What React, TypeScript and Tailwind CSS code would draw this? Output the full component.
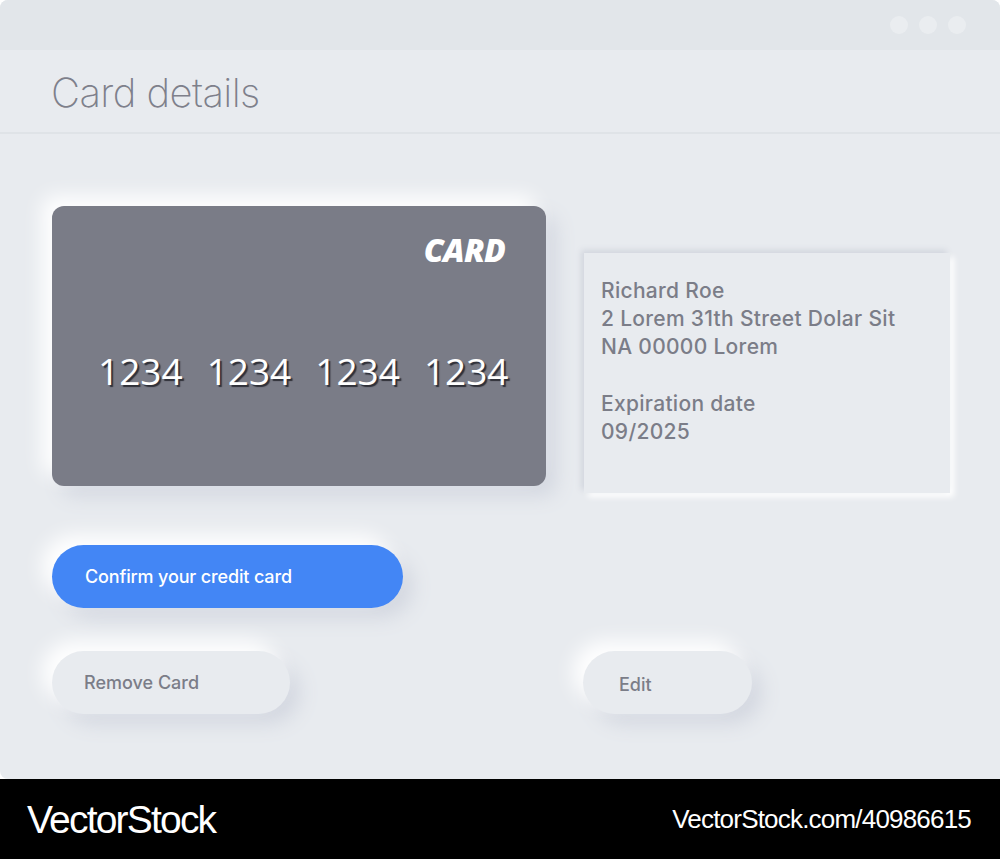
import React from "react";

const neo = "shadow-[-10px_-10px_20px_#ffffff,10px_10px_20px_#d3d7e0]";

export default function App() {
  return (
    <div className="w-[1000px] h-[859px] bg-white flex flex-col" style={{ fontFamily: "Inter, 'Noto Sans', sans-serif" }}>
      <div className="h-[779px] bg-[#e8ebef] rounded-t-[8px] rounded-bl-[8px] overflow-hidden flex flex-col">
        <div className="h-[50px] bg-[#e2e6ea] flex items-center justify-end gap-[11px] pr-[34px]">
          <div className="w-[18px] h-[18px] rounded-full bg-[#eaedf0]" />
          <div className="w-[18px] h-[18px] rounded-full bg-[#eaedf0]" />
          <div className="w-[18px] h-[18px] rounded-full bg-[#eaedf0]" />
        </div>
        <div className="h-[84px] border-b-2 border-[#dfe3e7] flex items-center pl-[51px]">
          <span className="text-[40px] font-extralight text-[#7e808b] tracking-[-0.6px] leading-none mt-[4px]">Card details</span>
        </div>
        <div className="flex-1 pl-[52px] pt-[72px] flex flex-col">
          <div className="flex items-start gap-[38px]">
            <div className={`w-[494px] h-[280px] rounded-[12px] bg-[#7a7c87] flex flex-col ${neo}`}>
              <div className="flex justify-end pr-[41px] pt-[24px]">
                <span className="text-[32px] leading-[40px] font-extrabold italic text-white tracking-[-0.8px]" style={{ fontFamily: "'Open Sans', sans-serif" }}>CARD</span>
              </div>
              <div className="flex gap-[24px] pl-[46px] mt-[82px]">
                {["1234", "1234", "1234", "1234"].map((n, i) => (
                  <span key={i} className="text-[37px] text-white leading-none [text-shadow:2px_2px_1px_#2f3038]" style={{ fontFamily: "'Open Sans', sans-serif" }}>{n}</span>
                ))}
              </div>
            </div>
            <div className="mt-[47px] w-[366px] h-[240px] bg-[#e8ebef] shadow-[-3px_-3px_6px_#d2d6de,4px_4px_6px_#ffffff] pl-[17px] pt-[24px] text-[21px] font-medium text-[#7b7d88] leading-[28px] tracking-[0.3px]">
              <div>Richard Roe</div>
              <div>2 Lorem 31th Street Dolar Sit</div>
              <div>NA 00000 Lorem</div>
              <div className="mt-[29px]">Expiration date</div>
              <div>09/2025</div>
            </div>
          </div>
          <div className={`mt-[52px] w-[351px] h-[63px] rounded-full bg-[#4386f5] flex items-center pl-[33px] text-[18px] font-medium text-white tracking-[-0.15px] ${neo}`}>
            Confirm your credit card
          </div>
          <div className="mt-[43px] flex">
            <div className={`w-[238px] h-[63px] rounded-full bg-[#e8ebef] flex items-center pl-[32px] text-[18px] font-medium text-[#7b7d88] ${neo}`}>
              Remove Card
            </div>
            <div className={`ml-[293px] w-[169px] h-[63px] rounded-full bg-[#e8ebef] flex items-center pl-[36px] pt-[3px] text-[18px] font-medium text-[#7b7d88] ${neo}`}>
              Edit
            </div>
          </div>
        </div>
      </div>
      <div className="h-[80px] bg-black flex items-center justify-between pl-[27px] pr-[29px] text-white" style={{ fontFamily: "'Liberation Sans', Arial, sans-serif" }}>
        <span className="text-[39px] tracking-[-1.8px] leading-none">VectorStock</span>
        <span className="text-[26px] tracking-[-0.8px] leading-none">VectorStock.com/40986615</span>
      </div>
    </div>
  );
}
